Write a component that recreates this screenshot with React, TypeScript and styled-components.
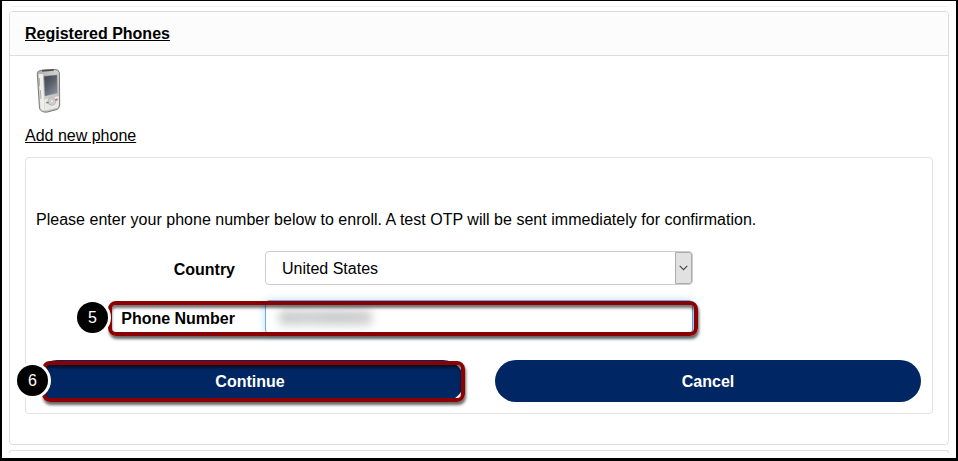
import React from 'react';
import styled, { createGlobalStyle } from 'styled-components';

const Global = createGlobalStyle`
  * { box-sizing: border-box; }
  body {
    margin: 0;
    background: #fff;
    color: #000;
    font: 16px/20px "Liberation Sans", Arial, sans-serif;
  }
`;

const Frame = styled.main`
  width: 958px;
  height: 461px;
  border: solid #000;
  border-width: 1px 2px 3px;
  padding: 0 7px;
  overflow: hidden;
  background: #fff;
`;

const PreviousEdge = styled.div`
  height: 6px;
  margin: 0 2px 4px;
  border-bottom: 1px solid #f0f0f0;
`;

const Panel = styled.section`
  height: 434px;
  border: 1px solid #ddd;
  border-radius: 4px;
`;

const PanelHeader = styled.header`
  height: 44px;
  padding: 12px 15px;
  border-bottom: 1px solid #ddd;
  border-radius: 3px 3px 0 0;
  background: #fcfcfc;
`;

const Title = styled.h1`
  margin: 0;
  font-size: 16px;
  line-height: 20px;
  text-decoration: underline;
`;

const PanelBody = styled.div`
  padding: 12px 15px 0;
`;

const PhoneIcon = styled.svg`
  display: block;
  width: 25px;
  height: 45px;
  margin-left: 11px;
`;

const AddLink = styled.a`
  display: block;
  width: max-content;
  margin-top: 13px;
  line-height: 20px;
  color: #000;
  text-decoration: underline;
`;

const EnrollBox = styled.form`
  height: 257px;
  margin-top: 11px;
  border: 1px solid #e2e2e2;
  border-radius: 4px;
  padding: 52px 10px 0;
`;

const Intro = styled.p`
  margin: 0 0 21px;
  line-height: 20px;
  letter-spacing: 0.02px;
`;

const FormRow = styled.div`
  position: relative;
  display: grid;
  grid-template-columns: 199px 428px;
  column-gap: 30px;
  align-items: center;
  height: 34px;
  margin-bottom: 15px;
`;

const Label = styled.label`
  padding-top: 4px;
  text-align: right;
  font-weight: bold;
`;

const Select = styled.div`
  display: flex;
  justify-content: space-between;
  align-items: center;
  height: 34px;
  border: 1px solid #ccc;
  border-radius: 4px;
  padding-left: 16px;
`;

const SelectValue = styled.span`
  padding-top: 2px;
`;

const SelectArrow = styled.span`
  display: flex;
  align-items: center;
  justify-content: center;
  width: 17px;
  height: 32px;
  border: 1px solid #adadad;
  border-radius: 0 3px 3px 0;
  background: #e1e1e1;
`;

const PhoneField = styled.div`
  height: 34px;
  overflow: hidden;
  border: 1px solid #66afe9;
  border-radius: 4px;
  padding: 9px 13px;
  box-shadow: inset 0 1px 1px rgba(0, 0, 0, 0.07), 0 0 8px rgba(102, 175, 233, 0.4);
`;

const Redaction = styled.div`
  width: 93px;
  height: 15px;
  border-radius: 4px;
  background: linear-gradient(90deg, #cbcccd, #cfd0d1 35%, #c9cacb 60%, #d0d0d0);
  filter: blur(5px);
`;

const Actions = styled.div`
  position: relative;
  display: grid;
  grid-template-columns: 428px 426px;
  column-gap: 31px;
  margin-top: 26px;
`;

const Button = styled.button`
  height: 42px;
  border: 0;
  border-radius: 21px;
  padding: 2px 0 0;
  background: #002663;
  color: #fff;
  font: bold 16px/20px "Liberation Sans", Arial, sans-serif;
`;

const Highlight = styled.div<{ $left: number; $top: number; $width: number; $height: number }>`
  position: absolute;
  left: ${p => p.$left}px;
  top: ${p => p.$top}px;
  width: ${p => p.$width}px;
  height: ${p => p.$height}px;
  border: 4px solid #8b0000;
  border-radius: 8px;
  box-shadow: 1px 3px 3px rgba(0, 0, 0, 0.6), inset 0 3px 3px rgba(0, 0, 0, 0.55);
  pointer-events: none;
`;

const StepBadge = styled.span<{ $left: number; $top: number }>`
  position: absolute;
  left: ${p => p.$left}px;
  top: ${p => p.$top}px;
  display: flex;
  align-items: center;
  justify-content: center;
  width: 31px;
  height: 31px;
  border-radius: 50%;
  background: #000;
  box-shadow: 0 0 0 3px #fff;
  color: #fff;
  line-height: 18px;
`;

const NextPanel = styled.div`
  height: 3px;
  margin-top: 5px;
  border: 1px solid #ddd;
  border-bottom: 0;
  border-radius: 4px 4px 0 0;
`;

function HandheldPhone() {
  return (
    <PhoneIcon viewBox="0 0 25 45" aria-label="Phone">
      <defs>
        <linearGradient id="shell" x1="0" y1="0" x2="1" y2="1">
          <stop offset="0" stopColor="#aaaaa8" />
          <stop offset="0.45" stopColor="#cfcfcd" />
          <stop offset="1" stopColor="#bcbcba" />
        </linearGradient>
        <linearGradient id="screen" x1="0" y1="0" x2="0.7" y2="1">
          <stop offset="0" stopColor="#3c414b" />
          <stop offset="0.55" stopColor="#5d636f" />
          <stop offset="1" stopColor="#858b99" />
        </linearGradient>
      </defs>
      <path d="M1.3 5.5Q1.3 3.2 3.5 2.8L7 1.9L18.5 1.4Q22.8 1.3 23.4 4.5L23.7 37Q23.5 40 21 41.5L11 44.1Q5.5 44.6 3.5 40.6Z" fill="url(#shell)" stroke="#7b7b79" strokeWidth="1" />
      <path d="M2.5 6.2L4.6 39.4Q5.6 42.7 8.4 42.6L6.9 6Z" fill="#efefee" />
      <path d="M8.3 31.5L8.8 42.5L20.8 40Q22.7 39 22.9 36V28" fill="#e9e9e8" />
      <path d="M6 2.9L17.8 1.9" stroke="#4d4d4d" strokeWidth="1.5" />
      <path d="M3.4 10V18M4.4 22L5 31" stroke="#aaa" strokeWidth="1" />
      <path d="M8 8.3L21 7L21.2 25L9 27.9Z" fill="url(#screen)" stroke="#858585" strokeWidth=".5" />
      <ellipse cx="15.8" cy="33.3" rx="3.9" ry="4" fill="#d0d0cf" stroke="#b0b0af" strokeWidth=".8" />
      <ellipse cx="15.8" cy="33.3" rx="1.7" ry="1.8" fill="#e8e8e7" stroke="#b5b5b4" strokeWidth=".5" />
      <path d="M10.3 34.8L12.6 34.4" stroke="#4b9b61" strokeWidth="1.5" />
      <path d="M19.3 32.1L21.8 31.3" stroke="#d5686b" strokeWidth="1.7" />
    </PhoneIcon>
  );
}

export default function App() {
  return (
    <>
      <Global />
      <Frame>
        <PreviousEdge />
        <Panel>
          <PanelHeader><Title>Registered Phones</Title></PanelHeader>
          <PanelBody>
            <HandheldPhone />
            <AddLink>Add new phone</AddLink>
            <EnrollBox>
              <Intro>Please enter your phone number below to enroll. A test OTP will be sent immediately for confirmation.</Intro>
              <FormRow>
                <Label>Country</Label>
                <Select>
                  <SelectValue>United States</SelectValue>
                  <SelectArrow>
                    <svg width="9" height="6" viewBox="0 0 9 6">
                      <path d="M.7.8L4.5 4.6L8.3.8" fill="none" stroke="#444" strokeWidth="1.1" />
                    </svg>
                  </SelectArrow>
                </Select>
              </FormRow>
              <FormRow>
                <Label>Phone Number</Label>
                <PhoneField><Redaction /></PhoneField>
                <Highlight $left={72} $top={1} $width={590} $height={35} />
                <StepBadge $left={41} $top={2}>5</StepBadge>
              </FormRow>
              <Actions>
                <Button type="button">Continue</Button>
                <Button type="button">Cancel</Button>
                <Highlight $left={6} $top={1} $width={423} $height={41} />
                <StepBadge $left={-19} $top={5}>6</StepBadge>
              </Actions>
            </EnrollBox>
          </PanelBody>
        </Panel>
        <NextPanel />
      </Frame>
    </>
  );
}
